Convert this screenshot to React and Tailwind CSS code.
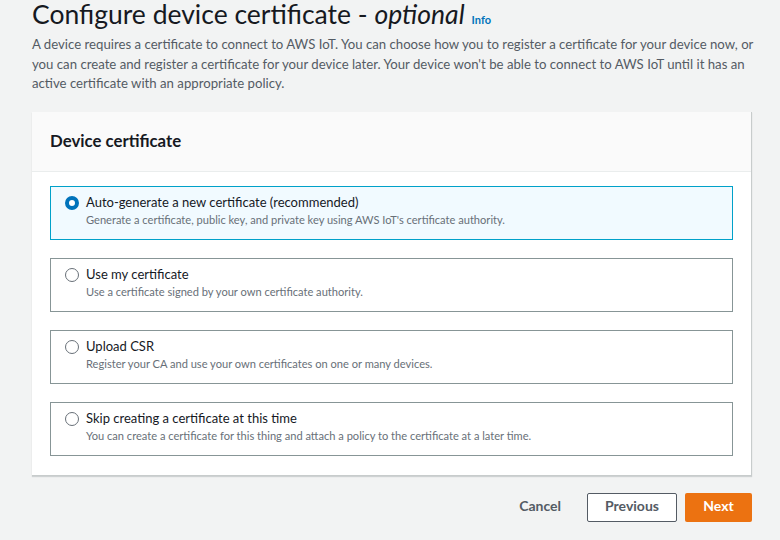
const OPTIONS = [
  { id: 'auto', title: 'Auto-generate a new certificate (recommended)', desc: "Generate a certificate, public key, and private key using AWS IoT's certificate authority." },
  { id: 'own', title: 'Use my certificate', desc: 'Use a certificate signed by your own certificate authority.' },
  { id: 'csr', title: 'Upload CSR', desc: 'Register your CA and use your own certificates on one or many devices.' },
  { id: 'skip', title: 'Skip creating a certificate at this time', desc: 'You can create a certificate for this thing and attach a policy to the certificate at a later time.' },
]

export default function App() {
  const selected = 'auto'

  return (
    <div className="w-[780px] h-[540px] overflow-hidden bg-[#f2f3f3] font-['Lato',sans-serif] text-[#16191f]">
      <div className="pl-[32px] pr-[26px]">
        <h1 className="text-[26.5px] leading-[30px] -mt-[1px]">
          Configure device certificate - <i>optional</i>
          <span className="ml-[7px] text-[11px] leading-none font-bold text-[#0073bb]">Info</span>
        </h1>
        <p className="mt-[6px] text-[13.2px] leading-[19.5px] text-[#545b64]">
          A device requires a certificate to connect to AWS IoT. You can choose how you to register a certificate for your device now, or you can create and register a certificate for your device later. Your device won't be able to connect to AWS IoT until it has an active certificate with an appropriate policy.
        </p>
      </div>

      {/* Card */}
      <div className="ml-[32px] mt-[18px] w-[720px] bg-white border-r border-b border-[#c8cccc] shadow-[0_1px_1px_rgba(0,28,36,0.15)]">
        <div className="h-[60px] bg-[#fafafa] border-b border-[#eaeded] px-[18px] flex items-center">
          <h2 className="text-[16.8px] font-bold">Device certificate</h2>
        </div>
        <div className="px-[18px] pt-[14px] pb-[19px] flex flex-col gap-[18px]">
          {OPTIONS.map(o => {
            const on = o.id === selected
            return (
              <div key={o.id}
                className={on
                  ? 'h-[54px] border border-[#00a1c9] bg-[#f1faff] flex pl-[14px] pt-[7px]'
                  : 'h-[54px] border border-[#879596] bg-white flex pl-[14px] pt-[7px]'}>
                {on ? (
                  <span className="mt-[2px] w-[14px] h-[14px] rounded-full border-[4px] border-[#0073bb] bg-white flex-shrink-0" />
                ) : (
                  <span className="mt-[2px] w-[14px] h-[14px] rounded-full border border-[#687078] bg-white flex-shrink-0" />
                )}
                <div className="ml-[7px]">
                  <div className="text-[13px] leading-[17px] text-[#16191f]">{o.title}</div>
                  <div className="text-[11.1px] leading-[18px] text-[#687078]">{o.desc}</div>
                </div>
              </div>
            )
          })}
        </div>
      </div>

      {/* Actions */}
      <div className="w-[752px] mt-[17px] flex justify-end items-center gap-[8px]">
        <button type="button" className="h-[29px] px-[18px] pb-[3px] text-[14px] font-bold text-[#545b64]">Cancel</button>
        <button type="button" className="h-[29px] w-[90px] pb-[3px] border border-[#545b64] rounded-[2px] bg-white text-[14px] font-bold text-[#545b64]">Previous</button>
        <button type="button" className="h-[29px] w-[67px] pb-[3px] rounded-[2px] bg-[#ec7211] text-[14px] font-bold text-white">Next</button>
      </div>
    </div>
  )
}
